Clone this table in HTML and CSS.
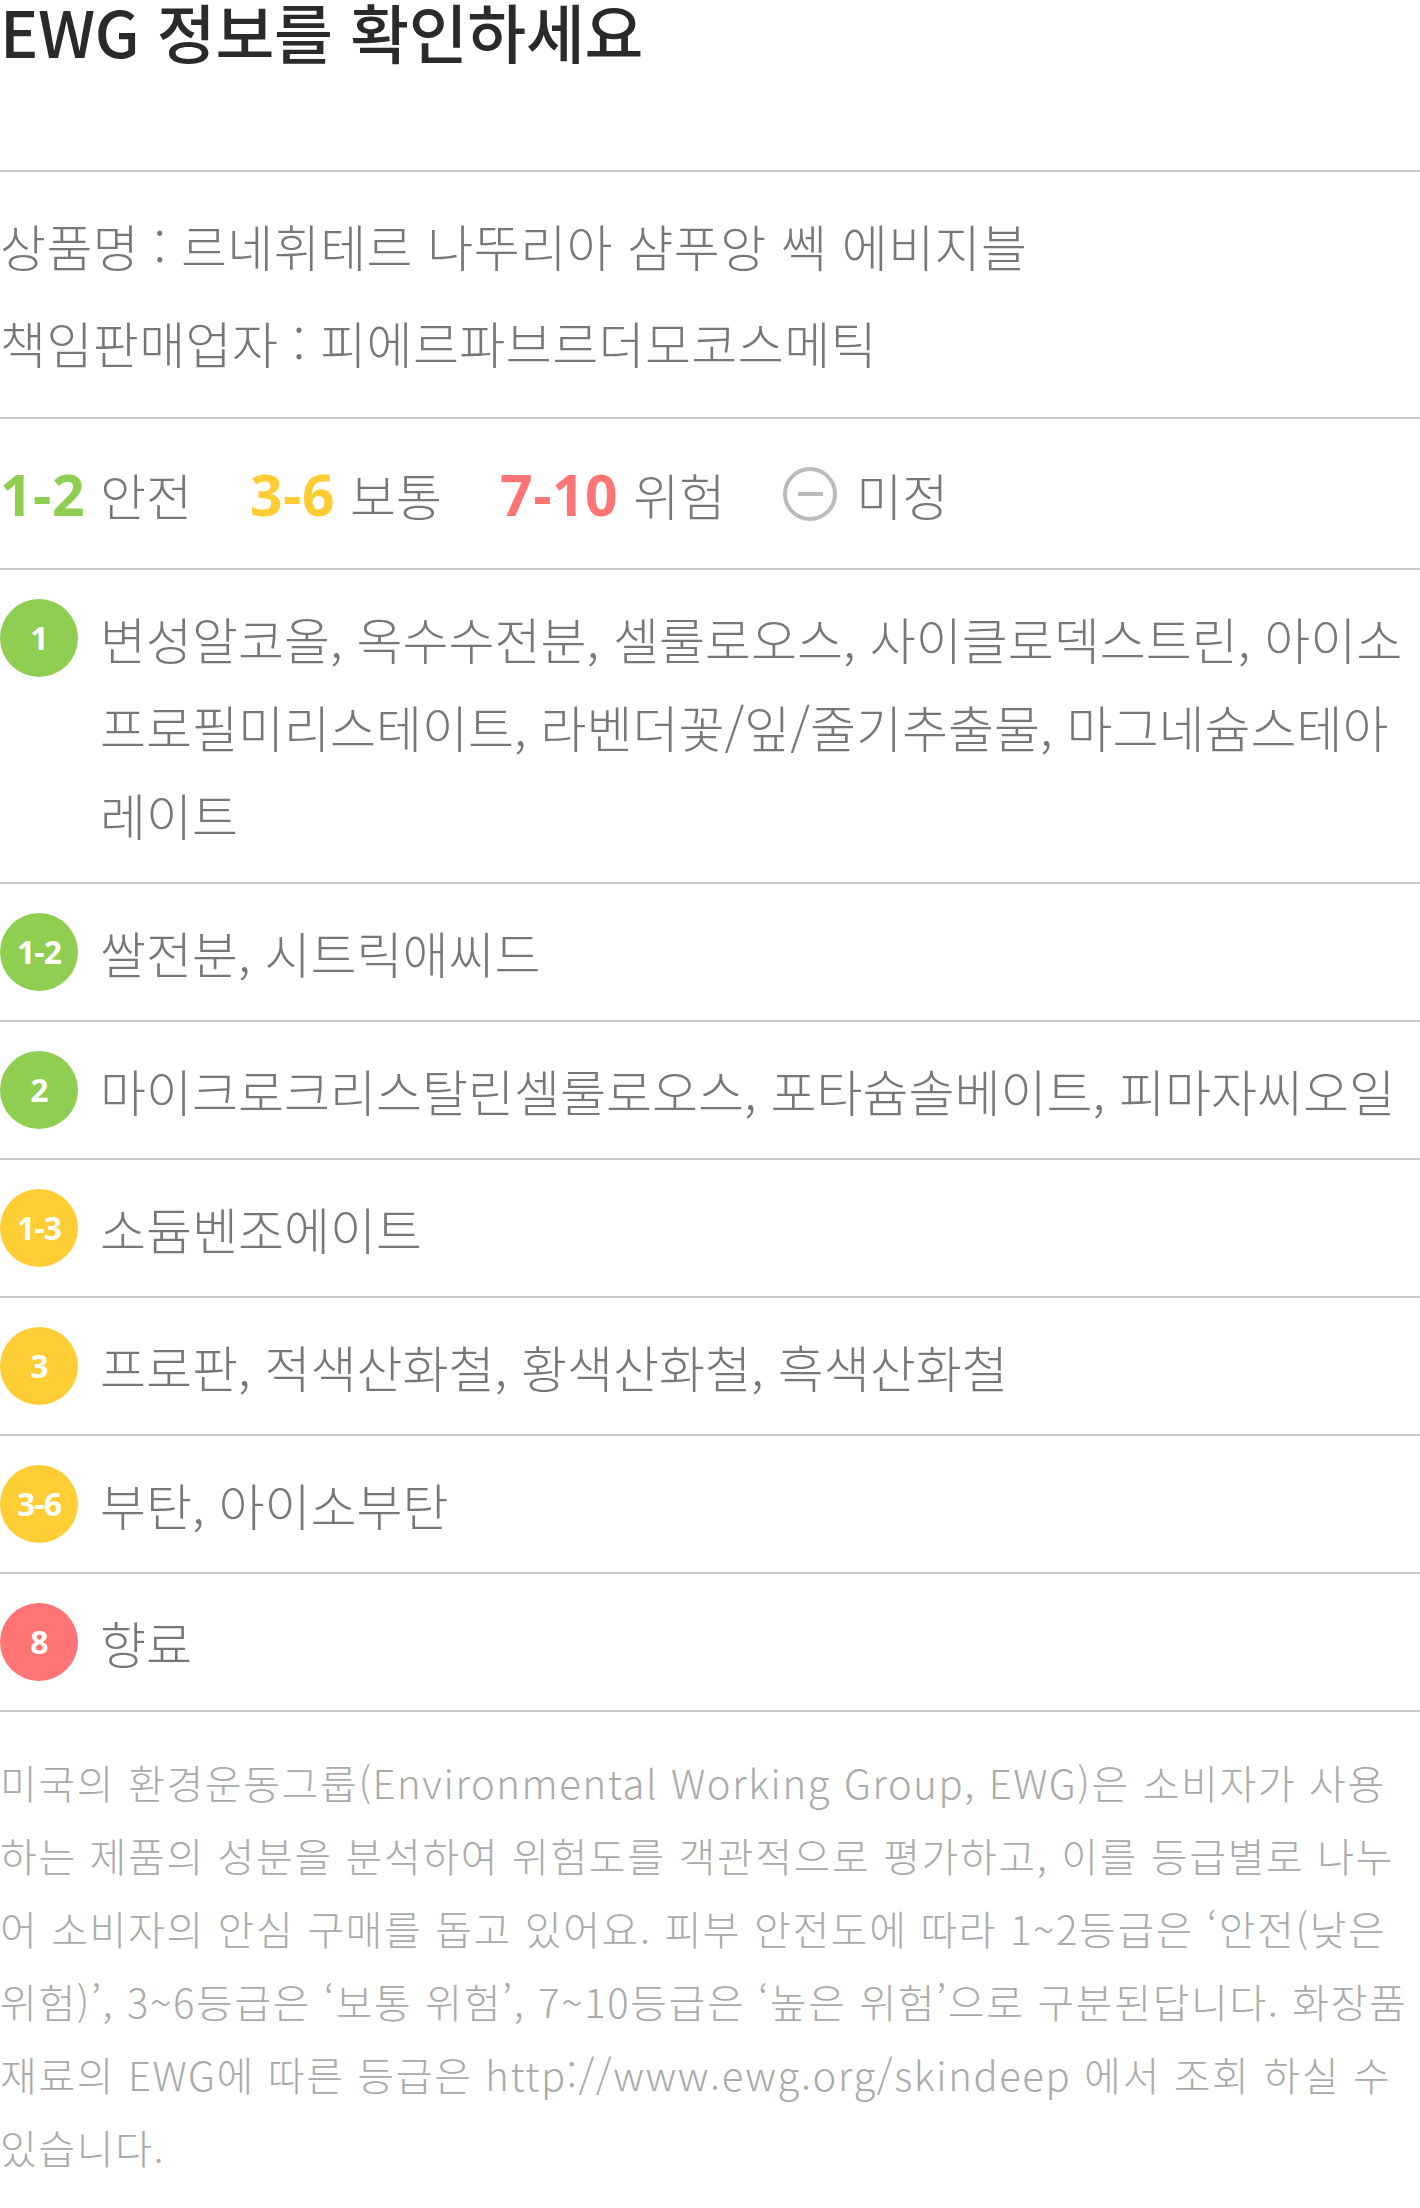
FILE: index.html
```html
<!DOCTYPE html>
<html lang="ko">
<head>
  <meta charset="UTF-8" />
  <meta name="viewport" content="width=device-width, initial-scale=1.0" />
  <title>EWG 정보</title>
  <link rel="stylesheet" href="styles.css">
</head>
<body>
  <div class="ewg">
    <div class="ewg-head">
      <h1>EWG 정보를 확인하세요</h1>
    </div>

    <div class="product-info">
      <p>상품명 : 르네휘테르 나뚜리아 샴푸앙 쎅 에비지블</p>
      <p>책임판매업자 : 피에르파브르더모코스메틱</p>
    </div>

    <div class="legend">
      <span class="legend-item"><b class="green">1-2</b>안전</span>
      <span class="legend-item"><b class="yellow">3-6</b>보통</span>
      <span class="legend-item"><b class="red">7-10</b>위험</span>
      <span class="legend-item"><i class="none-icon"></i>미정</span>
    </div>

    <ul class="ingredients">
      <li class="ingredient">
        <span class="grade green">1</span>
        <p>변성알코올, 옥수수전분, 셀룰로오스, 사이클로덱스트린, 아이소프로필미리스테이트, 라벤더꽃/잎/줄기추출물, 마그네슘스테아레이트</p>
      </li>
      <li class="ingredient">
        <span class="grade green">1-2</span>
        <p>쌀전분, 시트릭애씨드</p>
      </li>
      <li class="ingredient">
        <span class="grade green">2</span>
        <p>마이크로크리스탈린셀룰로오스, 포타슘솔베이트, 피마자씨오일</p>
      </li>
      <li class="ingredient">
        <span class="grade yellow">1-3</span>
        <p>소듐벤조에이트</p>
      </li>
      <li class="ingredient">
        <span class="grade yellow">3</span>
        <p>프로판, 적색산화철, 황색산화철, 흑색산화철</p>
      </li>
      <li class="ingredient">
        <span class="grade yellow">3-6</span>
        <p>부탄, 아이소부탄</p>
      </li>
      <li class="ingredient">
        <span class="grade red">8</span>
        <p>향료</p>
      </li>
    </ul>

    <p class="ewg-note">미국의 환경운동그룹(Environmental Working Group, EWG)은 소비자가 사용하는 제품의 성분을 분석하여 위험도를 객관적으로 평가하고, 이를 등급별로 나누어 소비자의 안심 구매를 돕고 있어요. 피부 안전도에 따라 1~2등급은 ‘안전(낮은 위험)’, 3~6등급은 ‘보통 위험’, 7~10등급은 ‘높은 위험’으로 구분된답니다. 화장품 재료의 EWG에 따른 등급은 http://www.ewg.org/skindeep 에서 조회 하실 수 있습니다.</p>
  </div>
</body>
</html>
```

FILE: styles.css
```css
body {
  margin: 0;
  background: #fff;
  font-family: "Noto Sans CJK KR", "Noto Sans", sans-serif;
  font-weight: 300;
  color: #777;
}
p, ul, h1 {
  margin: 0;
  padding: 0;
}
.ewg-head {
  padding-bottom: 110px;
}
.ewg-head h1 {
  font-size: 64px;
  line-height: 60px;
  font-weight: 500;
  color: #2a2a2a;
  letter-spacing: -0.3px;
}
.product-info {
  border-top: 2px solid #c8c8c8;
  padding: 25px 0 26px;
  font-size: 50px;
  line-height: 97px;
  letter-spacing: 0.4px;
}
.legend {
  border-top: 2px solid #c8c8c8;
  height: 149px;
  display: flex;
  align-items: center;
  gap: 58px;
  font-size: 50px;
}
.legend-item {
  display: flex;
  align-items: center;
  gap: 15px;
}
.legend-item b {
  font-family: "Open Sans", sans-serif;
  font-weight: 700;
  font-size: 57px;
  letter-spacing: 0.5px;
}
.green { color: #8fce50; }
.yellow { color: #ffcc33; }
.red { color: #ff7575; }
.none-icon {
  width: 54px;
  height: 54px;
  box-sizing: border-box;
  border: 4px solid #bbb;
  border-radius: 50%;
  display: flex;
  align-items: center;
  justify-content: center;
  margin-right: 4px;
}
.none-icon::before {
  content: "";
  width: 25px;
  height: 4px;
  background: #bbb;
}
.ingredients {
  list-style: none;
}
.ingredient {
  border-top: 2px solid #c8c8c8;
  padding: 24px 0;
  display: flex;
  align-items: flex-start;
  gap: 22px;
  font-size: 50px;
  line-height: 88px;
}
.ingredient p {
  flex: 1;
  word-break: break-all;
}
.grade {
  flex: none;
  width: 78px;
  height: 78px;
  margin-top: 5px;
  border-radius: 50%;
  color: #fff;
  font-family: "Open Sans", sans-serif;
  font-weight: 700;
  font-size: 32px;
  line-height: 78px;
  letter-spacing: -1px;
  text-align: center;
}
.grade.green { background: #8fce50; }
.grade.yellow { background: #ffcd34; }
.grade.red { background: #ff7575; }
.ewg-note {
  border-top: 2px solid #c8c8c8;
  padding: 34px 12px 40px 0;
  font-size: 40px;
  line-height: 73px;
  letter-spacing: 1.6px;
  color: #aaa;
  word-break: break-all;
}
```
